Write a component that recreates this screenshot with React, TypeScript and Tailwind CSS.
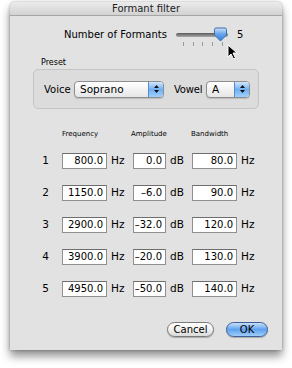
const rows = [
  { n: 1, f: '800.0', a: '0.0', b: '80.0' },
  { n: 2, f: '1150.0', a: '\u20136.0', b: '90.0' },
  { n: 3, f: '2900.0', a: '\u201332.0', b: '120.0' },
  { n: 4, f: '3900.0', a: '\u201320.0', b: '130.0' },
  { n: 5, f: '4950.0', a: '\u201350.0', b: '140.0' },
];

function Slider() {
  return (
    <svg width="62" height="24" viewBox="0 0 62 24">
      <defs>
        <linearGradient id="trk" x1="0" y1="0" x2="0" y2="1">
          <stop offset="0" stopColor="#5a5a5a" />
          <stop offset="1" stopColor="#a8a8a8" />
        </linearGradient>
        <linearGradient id="thm" x1="0" y1="0" x2="0" y2="1">
          <stop offset="0" stopColor="#cfe4fb" />
          <stop offset="0.45" stopColor="#6aa6ea" />
          <stop offset="1" stopColor="#2f7fe0" />
        </linearGradient>
      </defs>
      <rect x="4" y="7" width="52" height="4" rx="2" fill="url(#trk)" />
      {[11, 21, 30, 40, 50].map((x) => (
        <rect key={x} x={x} y="16" width="1" height="4" fill="#9a9a9a" />
      ))}
      <path d="M42.5 3.5 Q42.5 2 44 2 L53 2 Q54.5 2 54.5 3.5 L54.5 9 L48.5 15 L42.5 9 Z" fill="url(#thm)" stroke="#3f6fa8" strokeWidth="1" />
    </svg>
  );
}

function Cursor() {
  return (
    <svg className="absolute left-[217px] top-[42px]" width="12" height="16" viewBox="0 0 12 16">
      <path d="M1 1 L1 13 L4 10 L6.5 15 L8.5 14 L6 9 L10 9 Z" fill="#000" stroke="#fff" strokeWidth="1" />
    </svg>
  );
}

function Popup({ label, width }: { label: string; width: string }) {
  return (
    <div className={`flex h-[17px] ${width} overflow-hidden rounded-[4px] border border-[#8e8e8e] bg-gradient-to-b from-[#ffffff] via-[#f2f2f2] to-[#e6e6e6] shadow-[0_1px_1px_rgba(0,0,0,0.15)]`}>
      <span className="flex-1 pl-[5px] text-[10.5px] leading-[15px] text-black">{label}</span>
      <span className="flex w-[15px] flex-col items-center justify-center gap-[2px] border-l border-[#5b87c2] bg-gradient-to-b from-[#d4e7fc] via-[#6fb0f3] to-[#9fd0fb]">
        <svg width="5" height="3" viewBox="0 0 5 3"><path d="M2.5 0 L5 3 L0 3 Z" fill="#111" /></svg>
        <svg width="5" height="3" viewBox="0 0 5 3"><path d="M0 0 L5 0 L2.5 3 Z" fill="#111" /></svg>
      </span>
    </div>
  );
}

function Field({ value, w }: { value: string; w: string }) {
  return (
    <div className={`h-[16px] ${w} whitespace-nowrap border border-[#8f8f8f] border-t-[#6d6d6d] bg-white pr-[3px] text-right text-[10px] leading-[14px] text-black`}>
      {value}
    </div>
  );
}

export default function App() {
  return (
    <div className="min-h-screen bg-white pl-[10px] pt-[2px] font-['DejaVu_Sans',sans-serif]">
      <div className="relative flex h-[348px] w-[272px] flex-col rounded-t-[5px] bg-[#e2e2e2] shadow-[0_6px_10px_rgba(0,0,0,0.45),0_0_3px_rgba(0,0,0,0.3)]">
        <div className="h-[14px] rounded-t-[5px] border-b border-[#a5a5a5] bg-gradient-to-b from-[#ececec] to-[#d2d2d2] text-center text-[10px] leading-[14px] text-[#222]">
          Formant filter
        </div>

        <div className="mt-[10px] flex items-start">
          <span className="w-[162px] pl-[54px] text-[10px] leading-[17px] whitespace-nowrap text-black">Number of Formants</span>
          <Slider />
          <span className="ml-[3px] text-[10px] leading-[17px] text-black">5</span>
        </div>

        <span className="ml-[31px] mt-[8px] text-[8px] leading-[10px] text-black">Preset</span>
        <div className="ml-[23px] mt-[1px] flex h-[40px] w-[226px] items-center rounded-[5px] border border-[#c5c5c5] bg-[#dcdcdc] pl-[10px]">
          <span className="w-[30px] text-[10px] text-black">Voice</span>
          <Popup label="Soprano" width="w-[90px]" />
          <span className="ml-[10px] w-[32px] whitespace-nowrap text-[10px] tracking-[-0.2px] text-black">Vowel</span>
          <Popup label="A" width="w-[44px]" />
        </div>

        <div className="mt-[20px] flex text-[7px] leading-[10px] text-black">
          <span className="ml-[52px] w-[69px]">Frequency</span>
          <span className="w-[60px]">Amplitude</span>
          <span>Bandwidth</span>
        </div>

        <div className="mt-[14px] flex flex-col gap-[16px]">
          {rows.map((r) => (
            <div key={r.n} className="flex h-[16px] items-center text-[10.5px] text-black">
              <span className="w-[52px] pr-[13px] text-right">{r.n}</span>
              <Field value={r.f} w="w-[45px]" />
              <span className="ml-[4px] w-[22px]">Hz</span>
              <Field value={r.a} w="w-[33px]" />
              <span className="ml-[4px] w-[22px]">dB</span>
              <Field value={r.b} w="w-[45px]" />
              <span className="ml-[4px]">Hz</span>
            </div>
          ))}
        </div>

        <div className="mt-auto mb-[13px] flex justify-end gap-[12px] pr-[14px]">
          <button className="h-[15px] w-[47px] rounded-full border border-[#7a7a7a] bg-gradient-to-b from-[#ffffff] via-[#f0f0f0] to-[#dadada] text-[10px] leading-[13px] text-black shadow-[0_1px_1px_rgba(0,0,0,0.25)]">
            Cancel
          </button>
          <button className="h-[15px] w-[42px] rounded-full border border-[#3c5f99] bg-gradient-to-b from-[#c8e0fa] via-[#5fa2ee] to-[#9fcdf8] text-[10px] leading-[13px] text-black shadow-[0_1px_1px_rgba(0,0,0,0.25)]">
            OK
          </button>
        </div>

        <Cursor />
      </div>
    </div>
  );
}
